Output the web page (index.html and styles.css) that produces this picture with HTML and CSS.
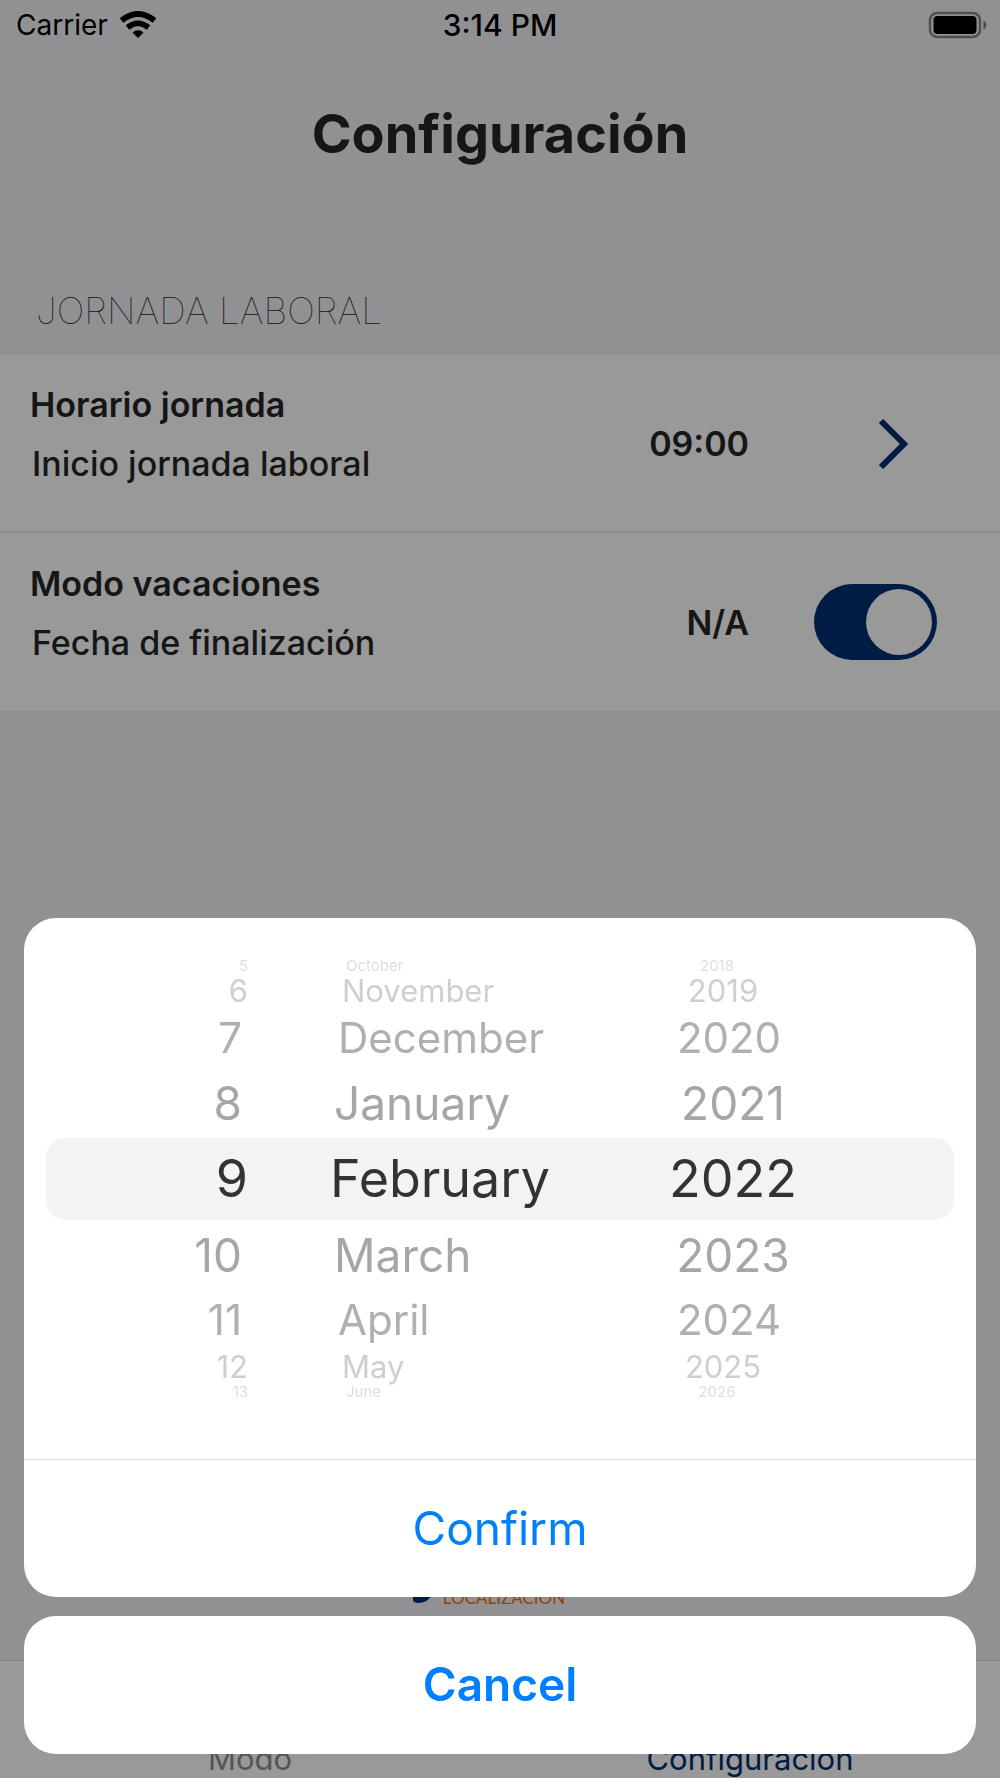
FILE: index.html
```html
<!DOCTYPE html>
<html lang="es">
<head>
<meta charset="utf-8">
<meta name="viewport" content="width=device-width, initial-scale=1">
<title>Configuración</title>
<link rel="stylesheet" href="styles.css">
</head>
<body>
<div class="screen">
  <header class="status">
    <div class="carrier">
      <span>Carrier</span>
      <svg width="38" height="28" viewBox="0 0 38 28" aria-hidden="true">
        <g fill="none" stroke="#000">
          <path d="M2.500 9.500Q19 -3.500 35.500 9.500" stroke-width="6"/>
          <path d="M8.500 16.500Q19 8 29.500 16.500" stroke-width="5.500"/>
        </g>
        <path d="M13.500 21.500Q19 17 24.500 21.500L19 27Z"/>
      </svg>
    </div>
    <time class="clock">3:14 PM</time>
    <svg class="battery" width="60" height="28" viewBox="0 0 60 28" aria-hidden="true">
      <rect x="2" y="2" width="50" height="24" rx="7" fill="none" stroke="#000" stroke-opacity=".45" stroke-width="2.500"/>
      <rect x="5.500" y="5" width="43" height="18" rx="4"/>
      <path d="M55.500 9Q61 14 55.500 19Z" fill-opacity=".5"/>
    </svg>
  </header>
  <main>
    <h1 class="title">Configuración</h1>
    <h2 class="section">JORNADA LABORAL</h2>
    <div class="list">
      <div class="item">
        <div class="words"><strong>Horario jornada</strong><span>Inicio jornada laboral</span></div>
        <span class="value">09:00</span>
        <button class="control open" type="button" aria-label="Cambiar horario">
          <svg width="32" height="52" viewBox="0 0 32 52" aria-hidden="true"><path d="M4 4L27 27L4 50" fill="none" stroke="#002f72" stroke-width="6"/></svg>
        </button>
      </div>
      <div class="item">
        <label class="words" for="vacation"><strong>Modo vacaciones</strong><span>Fecha de finalización</span></label>
        <span class="value">N/A</span>
        <input class="control switch" type="checkbox" id="vacation" checked>
      </div>
    </div>
  </main>
  <div class="brand">
    <svg width="22" height="36" viewBox="0 0 22 36" aria-hidden="true"><path d="M2 0H22V22Q18 33 8 33Q2 33 2 30Z" fill="#002f72"/></svg>
    <span>LOCALIZACIÓN</span>
  </div>
  <nav class="tabs">
    <a href="#modo">Modo</a>
    <a class="current" href="#configuracion">Configuración</a>
  </nav>
</div>

<div class="backdrop">
  <form class="sheet" role="dialog" aria-label="Fecha de finalización">
    <div class="panel">
      <div class="wheels">
        <div class="wheel day" role="radiogroup" aria-label="Day">
          <label class="far"><input type="radio" name="day">5</label>
          <label class="third"><input type="radio" name="day">6</label>
          <label class="second"><input type="radio" name="day">7</label>
          <label class="near"><input type="radio" name="day">8</label>
          <label class="picked"><input type="radio" name="day" checked>9</label>
          <label class="near"><input type="radio" name="day">10</label>
          <label class="second"><input type="radio" name="day">11</label>
          <label class="third"><input type="radio" name="day">12</label>
          <label class="far"><input type="radio" name="day">13</label>
        </div>
        <div class="wheel month" role="radiogroup" aria-label="Month">
          <label class="far"><input type="radio" name="month">October</label>
          <label class="third"><input type="radio" name="month">November</label>
          <label class="second"><input type="radio" name="month">December</label>
          <label class="near"><input type="radio" name="month">January</label>
          <label class="picked"><input type="radio" name="month" checked>February</label>
          <label class="near"><input type="radio" name="month">March</label>
          <label class="second"><input type="radio" name="month">April</label>
          <label class="third"><input type="radio" name="month">May</label>
          <label class="far"><input type="radio" name="month">June</label>
        </div>
        <div class="wheel year" role="radiogroup" aria-label="Year">
          <label class="far"><input type="radio" name="year">2018</label>
          <label class="third"><input type="radio" name="year">2019</label>
          <label class="second"><input type="radio" name="year">2020</label>
          <label class="near"><input type="radio" name="year">2021</label>
          <label class="picked"><input type="radio" name="year" checked>2022</label>
          <label class="near"><input type="radio" name="year">2023</label>
          <label class="second"><input type="radio" name="year">2024</label>
          <label class="third"><input type="radio" name="year">2025</label>
          <label class="far"><input type="radio" name="year">2026</label>
        </div>
      </div>
      <button class="action" type="button">Confirm</button>
    </div>
    <button class="action cancel" type="button">Cancel</button>
  </form>
</div>
</body>
</html>
```
FILE: styles.css
```css
* { box-sizing: border-box; }

body {
  margin: 0;
  background: #f2f2f7;
  color: #262626;
  font-family: Inter, "Liberation Sans", sans-serif;
}

button {
  border: 0;
  padding: 0;
  background: none;
  font-family: inherit;
}

.screen {
  display: flex;
  flex-direction: column;
  height: 100vh;
  overflow: hidden;
}

/* Status bar */
.status {
  display: grid;
  grid-template-columns: 1fr auto 1fr;
  align-items: center;
  height: 50px;
  padding: 0 12px;
  color: #000;
  font-size: 28px;
}
.carrier { display: flex; align-items: center; gap: 11px; padding-left: 4px; }
.clock { font-size: 30px; font-weight: 500; }
.battery { justify-self: end; }

/* Settings */
.title {
  margin: 46px 0 0;
  font-size: 54px;
  font-weight: 700;
  line-height: 76px;
  text-align: center;
}
.section {
  margin: 108px 0 0;
  padding: 0 36px 13px;
  font-size: 37px;
  font-weight: 100;
  line-height: 62px;
}
.item {
  display: flex;
  align-items: center;
  height: 176px;
  padding: 0 63px 0 30px;
  background: #fff;
  font-size: 34px;
}
.item + .item { height: 180px; border-top: 2px solid #e4e8ee; }
.words {
  display: flex;
  flex: 1;
  flex-direction: column;
  padding-bottom: 18px;
  line-height: 59px;
}
.words strong { font-weight: 600; }
.words span { padding-left: 2px; font-weight: 500; }
.value { font-weight: 600; }
.control { width: 123px; margin: 0 0 0 65px; }
.open { display: flex; justify-content: flex-end; padding-right: 28px; }
.switch {
  display: flex;
  justify-content: flex-end;
  height: 76px;
  padding: 5px;
  border-radius: 38px;
  background: #002f72;
  appearance: none;
}
.switch::before {
  width: 66px;
  border-radius: 50%;
  background: #fff;
  content: "";
}

/* Footer */
.brand {
  display: flex;
  justify-content: center;
  gap: 10px;
  margin: auto 0 54px;
  padding-right: 24px;
  color: #f4700f;
  font-family: Lato, sans-serif;
  font-size: 17px;
}
.brand span { align-self: flex-end; line-height: 16px; }
.tabs {
  display: grid;
  grid-template-columns: 1fr 1fr;
  align-items: end;
  height: 118px;
  border-top: 1px solid #d4d4da;
  background: #fff;
  font-size: 31px;
  line-height: 38px;
  text-align: center;
}
.tabs a { color: #8e8e8f; text-decoration: none; }
.tabs .current { color: #002f72; }

/* Date sheet */
.backdrop {
  position: fixed;
  inset: 0;
  display: flex;
  flex-direction: column;
  justify-content: flex-end;
  padding: 24px;
  background: rgba(0, 0, 0, .4);
}
.sheet { display: flex; flex-direction: column; gap: 19px; }
.panel, .cancel { border-radius: 32px; background: #fff; }
.panel { display: flex; flex-direction: column; }
.wheels {
  position: relative;
  display: grid;
  grid-template-columns: 202fr 82fr 336fr 134fr 154fr;
  margin: 40px 22px 59px;
}
/* Highlight behind the chosen date */
.wheels::before {
  position: absolute;
  top: 180px;
  right: 0;
  left: 0;
  height: 82px;
  border-radius: 20px;
  background: #f3f3f3;
  content: "";
}
.wheel { position: relative; display: flex; flex-direction: column; }
.day { grid-column: 1; text-align: right; }
.month { grid-column: 3; }
.year { grid-column: 4; text-align: center; }
.wheel label { white-space: nowrap; }
.wheel input { position: absolute; margin: 0; opacity: 0; }
.picked { height: 82px; color: #333; font-size: 52px; line-height: 82px; }
.near { height: 70px; color: #a6a6a6; font-size: 46px; line-height: 70px; }
.second { height: 60px; color: #b0b0b0; font-size: 42px; line-height: 60px; }
.third { height: 34px; color: #cfcfcf; font-size: 31px; line-height: 34px; }
.far { height: 16px; color: #dedede; font-size: 15px; line-height: 16px; }
.day .near, .day .second { padding-right: 6px; }
.month .near { padding-left: 4px; }
.month .second { padding-left: 8px; }
.month .third { padding-left: 12px; }
.month .far { padding-left: 16px; }
.year .second { padding-right: 8px; }
.year .third { padding-right: 20px; }
.year .far { padding-right: 32px; }

.action {
  height: 138px;
  padding-bottom: 2px;
  color: #007fff;
  font-size: 46px;
}
.panel .action { border-top: 1px solid #dcdcdc; }
.cancel { font-weight: 600; }
```
